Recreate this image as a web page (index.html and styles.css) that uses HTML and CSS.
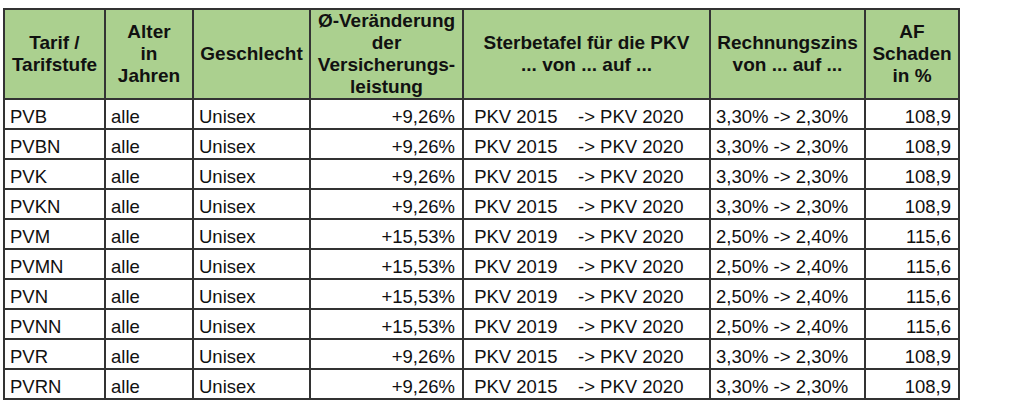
FILE: index.html
```html
<!DOCTYPE html>
<html lang="de">
<head>
<meta charset="utf-8">
<title>Tarife</title>
<link rel="stylesheet" href="styles.css">
</head>
<body>
<table class="tarif-table">
  <colgroup>
    <col class="c1"><col class="c2"><col class="c3"><col class="c4"><col class="c5"><col class="c6"><col class="c7">
  </colgroup>
  <thead>
    <tr class="head-row">
      <th>Tarif /<br>Tarifstufe</th>
      <th>Alter<br>in<br>Jahren</th>
      <th>Geschlecht</th>
      <th>Ø-Veränderung<br>der<br>Versicherungs-<br>leistung</th>
      <th>Sterbetafel für die PKV<br>... von ... auf ...</th>
      <th>Rechnungszins<br>von ... auf ...</th>
      <th>AF<br>Schaden<br>in %</th>
    </tr>
  </thead>
  <tbody>
    <tr><td>PVB</td><td>alle</td><td>Unisex</td><td class="num">+9,26%</td><td class="pre"> PKV 2015    -&gt; PKV 2020</td><td>3,30% -&gt; 2,30%</td><td class="num">108,9</td></tr>
    <tr><td>PVBN</td><td>alle</td><td>Unisex</td><td class="num">+9,26%</td><td class="pre"> PKV 2015    -&gt; PKV 2020</td><td>3,30% -&gt; 2,30%</td><td class="num">108,9</td></tr>
    <tr><td>PVK</td><td>alle</td><td>Unisex</td><td class="num">+9,26%</td><td class="pre"> PKV 2015    -&gt; PKV 2020</td><td>3,30% -&gt; 2,30%</td><td class="num">108,9</td></tr>
    <tr><td>PVKN</td><td>alle</td><td>Unisex</td><td class="num">+9,26%</td><td class="pre"> PKV 2015    -&gt; PKV 2020</td><td>3,30% -&gt; 2,30%</td><td class="num">108,9</td></tr>
    <tr><td>PVM</td><td>alle</td><td>Unisex</td><td class="num">+15,53%</td><td class="pre"> PKV 2019    -&gt; PKV 2020</td><td>2,50% -&gt; 2,40%</td><td class="num">115,6</td></tr>
    <tr><td>PVMN</td><td>alle</td><td>Unisex</td><td class="num">+15,53%</td><td class="pre"> PKV 2019    -&gt; PKV 2020</td><td>2,50% -&gt; 2,40%</td><td class="num">115,6</td></tr>
    <tr><td>PVN</td><td>alle</td><td>Unisex</td><td class="num">+15,53%</td><td class="pre"> PKV 2019    -&gt; PKV 2020</td><td>2,50% -&gt; 2,40%</td><td class="num">115,6</td></tr>
    <tr><td>PVNN</td><td>alle</td><td>Unisex</td><td class="num">+15,53%</td><td class="pre"> PKV 2019    -&gt; PKV 2020</td><td>2,50% -&gt; 2,40%</td><td class="num">115,6</td></tr>
    <tr><td>PVR</td><td>alle</td><td>Unisex</td><td class="num">+9,26%</td><td class="pre"> PKV 2015    -&gt; PKV 2020</td><td>3,30% -&gt; 2,30%</td><td class="num">108,9</td></tr>
    <tr><td>PVRN</td><td>alle</td><td>Unisex</td><td class="num">+9,26%</td><td class="pre"> PKV 2015    -&gt; PKV 2020</td><td>3,30% -&gt; 2,30%</td><td class="num">108,9</td></tr>
  </tbody>
</table>
</body>
</html>
```

FILE: styles.css
```css
html, body {
  margin: 0;
  padding: 0;
  background: #ffffff;
}

body {
  padding: 8px 0 0 3px;
  font-family: "Liberation Sans", Arial, sans-serif;
  color: #111111;
}

.tarif-table {
  border-collapse: collapse;
  table-layout: fixed;
  width: 955px;
  border: 2px solid #111111;
}

.c1 { width: 101px; }
.c2 { width: 88px; }
.c3 { width: 117px; }
.c4 { width: 153px; }
.c5 { width: 247px; }
.c6 { width: 155px; }
.c7 { width: 94px; }

.tarif-table th,
.tarif-table td {
  border: 2px solid #333333;
  white-space: nowrap;
  overflow: hidden;
}

.head-row {
  height: 90px;
}

.tarif-table th {
  background: #abd08f;
  font-weight: bold;
  font-size: 19px;
  line-height: 22px;
  text-align: center;
  vertical-align: middle;
  padding: 0 1px;
  color: #111111;
}

.tarif-table tbody tr {
  height: 30px;
}

.tarif-table td {
  font-size: 18.5px;
  line-height: 21px;
  vertical-align: bottom;
  padding: 0 6px 1px 5px;
  text-align: left;
}

.tarif-table td.num {
  text-align: right;
  padding-right: 7px;
}

.tarif-table td.pre {
  white-space: pre;
}
```
